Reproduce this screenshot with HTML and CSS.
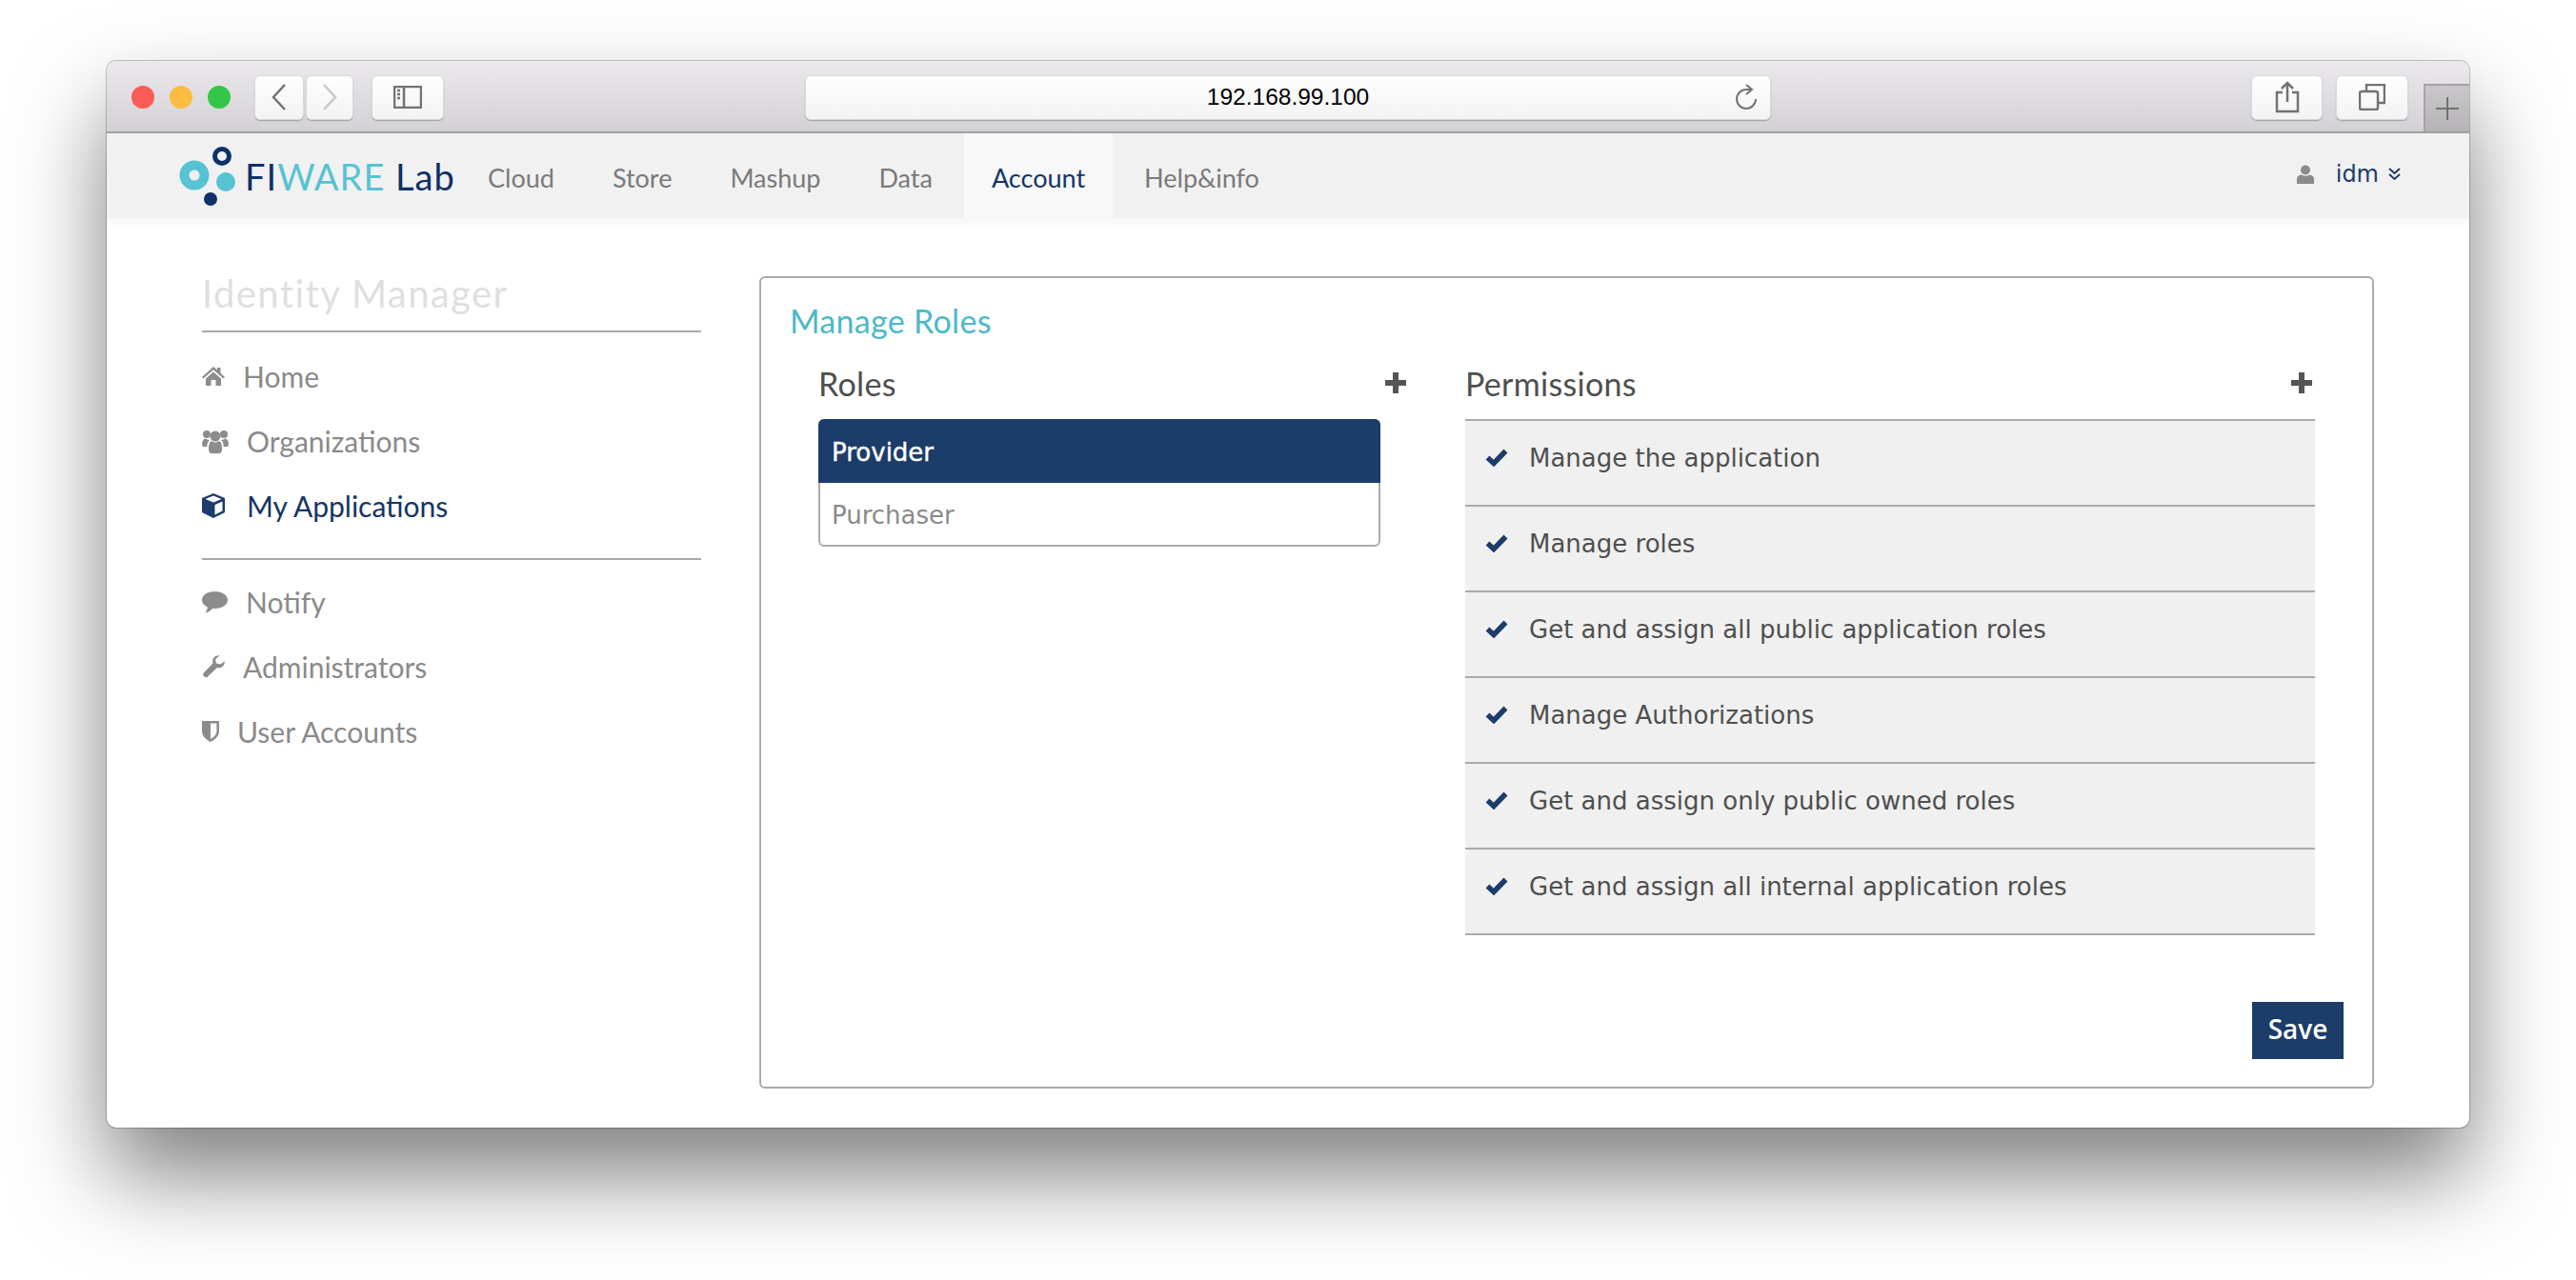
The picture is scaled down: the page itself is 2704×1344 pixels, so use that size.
FILE: index.html
```html
<!doctype html>
<html lang="en-us">

<head>
    <title>FIWARE Lab : Manage Roles</title>
    <link rel="stylesheet" href="styles.css">
</head>

<body>
    <div class="window">
        <!-- browser chrome -->
        <div class="toolbar">
            <div class="lights">
                <span class="light red"></span>
                <span class="light yellow"></span>
                <span class="light green"></span>
            </div>
            <div class="tool back">
                <svg width="18" height="30" viewBox="0 0 18 30"><path d="M15 2 L3 15 L15 28" class="tool-line"/></svg>
            </div>
            <div class="tool forward">
                <svg width="18" height="30" viewBox="0 0 18 30"><path d="M3 2 L15 15 L3 28" class="tool-line faded"/></svg>
            </div>
            <div class="tool sidebar-btn">
                <svg width="30" height="24" viewBox="0 0 30 24"><rect x="1" y="1" width="28" height="22" class="tool-line"/><path d="M11 1 V23" class="tool-line"/><path d="M4 5 H7 M4 9 H7 M4 13 H7" class="tool-line"/></svg>
            </div>
            <div class="url-bar">
                <span></span>
                <span class="url-text">192.168.99.100</span>
                <svg class="reload" width="26" height="28" viewBox="0 0 26 28"><path d="M23 16 A10 10 0 1 1 13 6 H18" class="tool-line thin"/><path d="M13 1 L19 6 L13 11" class="tool-line thin"/></svg>
            </div>
            <div class="tool share">
                <svg width="26" height="34" viewBox="0 0 26 34"><path d="M8 12 H2 V32 H24 V12 H18" class="tool-line"/><path d="M13 22 V2 M7 8 L13 2 L19 8" class="tool-line"/></svg>
            </div>
            <div class="tool tabs">
                <svg width="28" height="28" viewBox="0 0 28 28"><rect x="1" y="8" width="19" height="19" rx="2" class="tool-line"/><path d="M8 8 V1 H27 V20 H20" class="tool-line"/></svg>
            </div>
            <div class="new-tab">
                <svg width="26" height="26" viewBox="0 0 26 26"><path d="M13 1 V25 M1 13 H25" class="tool-line thin"/></svg>
            </div>
        </div>

        <!-- site nav -->
        <div class="navbar">
            <div class="logo">
                <svg width="60" height="64" viewBox="0 0 60 64">
                    <circle cx="16" cy="31" r="10.5" class="logo-ring"/>
                    <circle cx="45" cy="11" r="7.5" class="logo-ring-small"/>
                    <circle cx="49" cy="38" r="10" class="logo-teal"/>
                    <circle cx="33" cy="56" r="7" class="logo-navy"/>
                </svg>
                <span class="logo-text"><span class="navy">FI</span><span class="teal">WARE</span> <span class="navy">Lab</span></span>
            </div>
            <a class="nav-link">Cloud</a>
            <a class="nav-link">Store</a>
            <a class="nav-link">Mashup</a>
            <a class="nav-link">Data</a>
            <a class="nav-link active">Account</a>
            <a class="nav-link">Help&amp;info</a>
            <div class="user">
                <svg width="18" height="20" viewBox="0 0 18 20"><circle cx="9" cy="5.5" r="5"/><path d="M0 20 V15 Q0 11 5 10.5 Q9 13 13 10.5 Q18 11 18 15 V20 Z"/></svg>
                <span class="user-name">idm</span>
                <svg width="15" height="15" viewBox="0 0 15 15"><path d="M2 2 L7.5 7 L13 2 M2 8 L7.5 13 L13 8" class="chevrons"/></svg>
            </div>
        </div>

        <div class="content">
            <div class="sidebar">
                <h2 class="side-title">Identity Manager</h2>
                <ul class="side-menu">
                    <li>
                        <svg width="24" height="20" viewBox="0 0 24 20"><path d="M12 0 L16 3.6 V1 H19.5 V6.8 L24 11 L22.5 12.5 L12 3.2 L1.5 12.5 L0 11 Z M4 12.5 L12 5.4 L20 12.5 V20 H14.5 V14 H9.5 V20 H4 Z"/></svg>
                        Home
                    </li>
                    <li>
                        <svg width="28" height="26" viewBox="0 0 28 26"><circle cx="5" cy="6" r="4"/><circle cx="23" cy="6" r="4"/><circle cx="14" cy="8" r="5.5"/><path d="M0 17 Q0 11 4 10.5 Q6 12 8 12 Q5 15 5.5 19 H2 Q0 19 0 17 Z M28 17 Q28 11 24 10.5 Q22 12 20 12 Q23 15 22.5 19 H26 Q28 19 28 17 Z M7 21 Q7 14 10 13 Q14 16 18 13 Q21 14 21 21 Q21 26 18 26 H10 Q7 26 7 21 Z"/></svg>
                        Organizations
                    </li>
                    <li class="current">
                        <svg width="24" height="26" viewBox="0 0 24 26"><path d="M12 0 L24 5 V20 L12 26 L0 20 V5 Z M3.5 6 L12 9.6 L20.5 6 L12 2.6 Z M13.5 12 V22.6 L21.5 18.6 V8.6 Z"/></svg>
                        My Applications
                    </li>
                </ul>
                <ul class="side-menu second">
                    <li>
                        <svg width="27" height="24" viewBox="0 0 27 24"><path d="M13.5 1 C21 1 27 4.8 27 10 C27 15 21 19 13.5 19 L11 18.9 C9 21 6.5 23 3.5 23.5 C5 21.5 5.8 19.5 5.8 17.5 C2.2 15.8 0 13 0 10 C0 4.8 6 1 13.5 1 Z"/></svg>
                        Notify
                    </li>
                    <li>
                        <svg width="24" height="24" viewBox="0 0 24 24"><path d="M23.6 6.5 C24.4 10.5 20.5 14.6 16 13 L5.5 23 C4 24.4 0 21 1.4 19 L11.5 8.5 C9.8 4 14 -0.6 18.6 0.3 L14 4.6 L15 8.4 L19.2 9.6 Z"/></svg>
                        Administrators
                    </li>
                    <li>
                        <svg width="18" height="22" viewBox="0 0 18 22"><path d="M0 0 H18 V11 C18 16 13 20 9 22 C5 20 0 16 0 11 Z M9 2.6 V19 C12 17.4 15.4 14.4 15.4 11 V2.6 Z" fill-rule="evenodd"/></svg>
                        User Accounts
                    </li>
                </ul>
            </div>

            <div class="panel">
                <h3 class="panel-title">Manage Roles</h3>
                <div class="columns">
                    <div>
                        <div class="col-head">
                            <span>Roles</span>
                            <svg class="plus" width="22" height="22" viewBox="0 0 22 22"><path d="M11 0 V22 M0 11 H22"/></svg>
                        </div>
                        <ul class="role-list">
                            <li class="role selected">Provider</li>
                            <li class="role">Purchaser</li>
                        </ul>
                    </div>
                    <div>
                        <div class="col-head perm-head">
                            <span>Permissions</span>
                            <svg class="plus" width="22" height="22" viewBox="0 0 22 22"><path d="M11 0 V22 M0 11 H22"/></svg>
                        </div>
                        <ul class="perm-list">
                            <li class="perm"><svg width="24" height="20" viewBox="0 0 24 20"><path d="M2.5 10.5 L9 16.5 L21.5 3.5"/></svg>Manage the application</li>
                            <li class="perm"><svg width="24" height="20" viewBox="0 0 24 20"><path d="M2.5 10.5 L9 16.5 L21.5 3.5"/></svg>Manage roles</li>
                            <li class="perm"><svg width="24" height="20" viewBox="0 0 24 20"><path d="M2.5 10.5 L9 16.5 L21.5 3.5"/></svg>Get and assign all public application roles</li>
                            <li class="perm"><svg width="24" height="20" viewBox="0 0 24 20"><path d="M2.5 10.5 L9 16.5 L21.5 3.5"/></svg>Manage Authorizations</li>
                            <li class="perm"><svg width="24" height="20" viewBox="0 0 24 20"><path d="M2.5 10.5 L9 16.5 L21.5 3.5"/></svg>Get and assign only public owned roles</li>
                            <li class="perm"><svg width="24" height="20" viewBox="0 0 24 20"><path d="M2.5 10.5 L9 16.5 L21.5 3.5"/></svg>Get and assign all internal application roles</li>
                        </ul>
                    </div>
                </div>
                <div class="panel-foot">
                    <button class="save">Save</button>
                </div>
            </div>
        </div>
    </div>
</body>

</html>
```

FILE: styles.css
```css
* {
    box-sizing: border-box;
}

body {
    margin: 0;
    padding: 64px 112px 0;
    height: 1344px;
    overflow: hidden;
    background-color: white;
    font-family: Lato, sans-serif;
}

ul {
    list-style: none;
    margin: 0;
    padding: 0;
}

.window {
    width: 2480px;
    height: 1120px;
    border-radius: 10px;
    overflow: hidden;
    background-color: white;
    box-shadow: 0 0 0 1px rgba(0, 0, 0, .22), 0 50px 95px rgba(0, 0, 0, .5);
}

/* browser chrome */
.toolbar {
    display: flex;
    align-items: center;
    height: 76px;
    padding: 2px 0 0 26px;
    background: linear-gradient(#ebe9ec, #d3d1d5);
    border-bottom: 2px solid #a5a3a6;
}

.lights {
    display: flex;
    gap: 16px;
}

.light {
    width: 24px;
    height: 24px;
    border-radius: 50%;
}

.red { background-color: #fc5b57; }
.yellow { background-color: #fdbc40; }
.green { background-color: #33c748; }

.tool {
    display: flex;
    align-items: center;
    justify-content: center;
    height: 47px;
    border: 1px solid #d9d8da;
    border-radius: 6px;
    background: linear-gradient(#fefefe, #f3f3f3);
    box-shadow: 0 1px 1px rgba(0, 0, 0, .25);
}

.tool-line {
    fill: none;
    stroke: #727272;
    stroke-width: 2.5;
}

.tool-line.thin {
    stroke-width: 2;
}

.tool-line.faded {
    stroke: #c8c8c8;
}

.back { width: 52px; margin-left: 25px; }
.forward { width: 50px; margin-left: 2px; }
.sidebar-btn { width: 76px; margin-left: 19px; }
.share { width: 75px; margin-left: 504px; }
.tabs { width: 76px; margin-left: 14px; }

.url-bar {
    display: grid;
    grid-template-columns: 1fr auto 1fr;
    align-items: center;
    width: 1014px;
    height: 47px;
    margin-left: 379px;
    padding: 0 12px;
    border: 1px solid #d9d8da;
    border-radius: 6px;
    background: linear-gradient(#fefefe, #f3f3f3);
    box-shadow: 0 1px 1px rgba(0, 0, 0, .25);
}

.url-text {
    font-family: "Liberation Sans", sans-serif;
    font-size: 24.5px;
    color: black;
}

.reload {
    justify-self: end;
}

.new-tab {
    display: flex;
    align-items: center;
    justify-content: center;
    align-self: flex-end;
    width: 48px;
    height: 50px;
    margin-left: 16px;
    background: linear-gradient(#c9c7ca, #b5b3b6);
    border-top: 2px solid #a5a3a6;
    border-left: 2px solid #a5a3a6;
}

/* site nav */
.navbar {
    position: relative;
    display: flex;
    height: 89px;
    padding-left: 76px;
    gap: 5px;
    background-color: #f1f1f2;
    box-shadow: 0 4px 12px rgba(0, 0, 0, .05);
}

.logo {
    display: flex;
    align-items: center;
    width: 291px;
    gap: 9px;
}

.logo-ring {
    fill: none;
    stroke: #57c3d2;
    stroke-width: 10;
}

.logo-ring-small {
    fill: none;
    stroke: #0f3168;
    stroke-width: 5;
}

.logo-teal { fill: #57c3d2; }
.logo-navy { fill: #0f3168; }

.logo-text {
    font-size: 38px;
    letter-spacing: 1px;
    white-space: nowrap;
}

.navy { color: #0f3168; }
.teal { color: #57c3d2; }

.nav-link {
    display: flex;
    align-items: center;
    padding: 3px 28px 0;
    font-size: 27px;
    color: #7a7a7a;
}

.nav-link.active {
    padding: 3px 29px 0;
    background-color: #f8f8f8;
    color: #143566;
}

.user {
    display: flex;
    align-items: center;
    gap: 9px;
    margin-left: auto;
    margin-right: 71px;
    padding-bottom: 4px;
}

.user svg:first-child {
    fill: #8b8b8b;
    margin-right: 14px;
}

.user-name {
    font-family: "DejaVu Sans", sans-serif;
    font-size: 24px;
    color: #1c3c69;
}

.chevrons {
    fill: none;
    stroke: #1c3c69;
    stroke-width: 2;
}

/* page */
.content {
    display: flex;
    padding: 61px 100px 0;
    gap: 61px;
}

.sidebar {
    width: 524px;
    flex-shrink: 0;
}

.side-title {
    margin: 0;
    height: 59px;
    border-bottom: 2px solid #a8a8a8;
    font-size: 40px;
    font-weight: 400;
    letter-spacing: 1.4px;
    line-height: 36px;
    color: #dfdfdf;
}

.side-menu {
    padding: 12px 0 21px;
    border-bottom: 2px solid #a8a8a8;
}

.side-menu.second {
    padding-top: 10px;
    border-bottom: 0;
}

.side-menu li {
    display: flex;
    align-items: center;
    gap: 19px;
    height: 68px;
    font-size: 30px;
    color: #8a8a8a;
}

.side-menu li svg {
    fill: #8c8c8c;
}

.side-menu li.current {
    color: #143566;
    gap: 23px;
}

.side-menu li.current svg {
    fill: #1c3c69;
}

.panel {
    flex: 1;
    height: 853px;
    padding: 0 30px 29px;
    border: 2px solid #aaaaaa;
    border-radius: 6px;
}

.panel-title {
    margin: 0;
    padding-top: 24px;
    height: 86px;
    font-size: 34px;
    font-weight: 400;
    letter-spacing: .3px;
    color: #4db8c8;
}

.columns {
    display: grid;
    grid-template-columns: 617px 892px;
    gap: 62px;
    padding-left: 30px;
}

.col-head {
    display: flex;
    align-items: center;
    justify-content: space-between;
    height: 62px;
    padding-bottom: 14px;
    font-size: 34px;
    letter-spacing: .3px;
    color: #4f4f4f;
}

.perm-head {
    padding-right: 3px;
}

.plus {
    fill: none;
    stroke: #555555;
    stroke-width: 6;
}

.role-list {
    width: 590px;
    border-radius: 6px;
    border: 2px solid #aaaaaa;
}

.role {
    display: flex;
    align-items: center;
    height: 65px;
    padding: 2px 0 0 12px;
    font-family: "DejaVu Sans", sans-serif;
    font-size: 26px;
    color: #8a8a8a;
}

.role.selected {
    height: 67px;
    margin: -2px -2px 0;
    padding-left: 14px;
    background-color: #1c3c69;
    border-radius: 6px 6px 0 0;
    color: white;
    -webkit-text-stroke: .4px white;
}

.perm-list {
    border-top: 2px solid #aaaaaa;
}

.perm {
    display: flex;
    gap: 22px;
    height: 90px;
    padding: 24px 0 0 21px;
    border-bottom: 2px solid #aaaaaa;
    background-color: #f0f0f0;
    font-family: "DejaVu Sans", sans-serif;
    font-size: 26px;
    color: #4f4f4f;
}

.perm svg {
    margin-top: 4px;
    fill: none;
    stroke: #1c3c69;
    stroke-width: 5.5;
}

.panel-foot {
    display: flex;
    justify-content: flex-end;
    margin-top: 70px;
}

.save {
    width: 96px;
    height: 60px;
    border: 0;
    padding: 0 0 4px;
    background-color: #1c3c69;
    color: white;
    font-family: "Open Sans", sans-serif;
    font-size: 28px;
    font-weight: 600;
}
```
